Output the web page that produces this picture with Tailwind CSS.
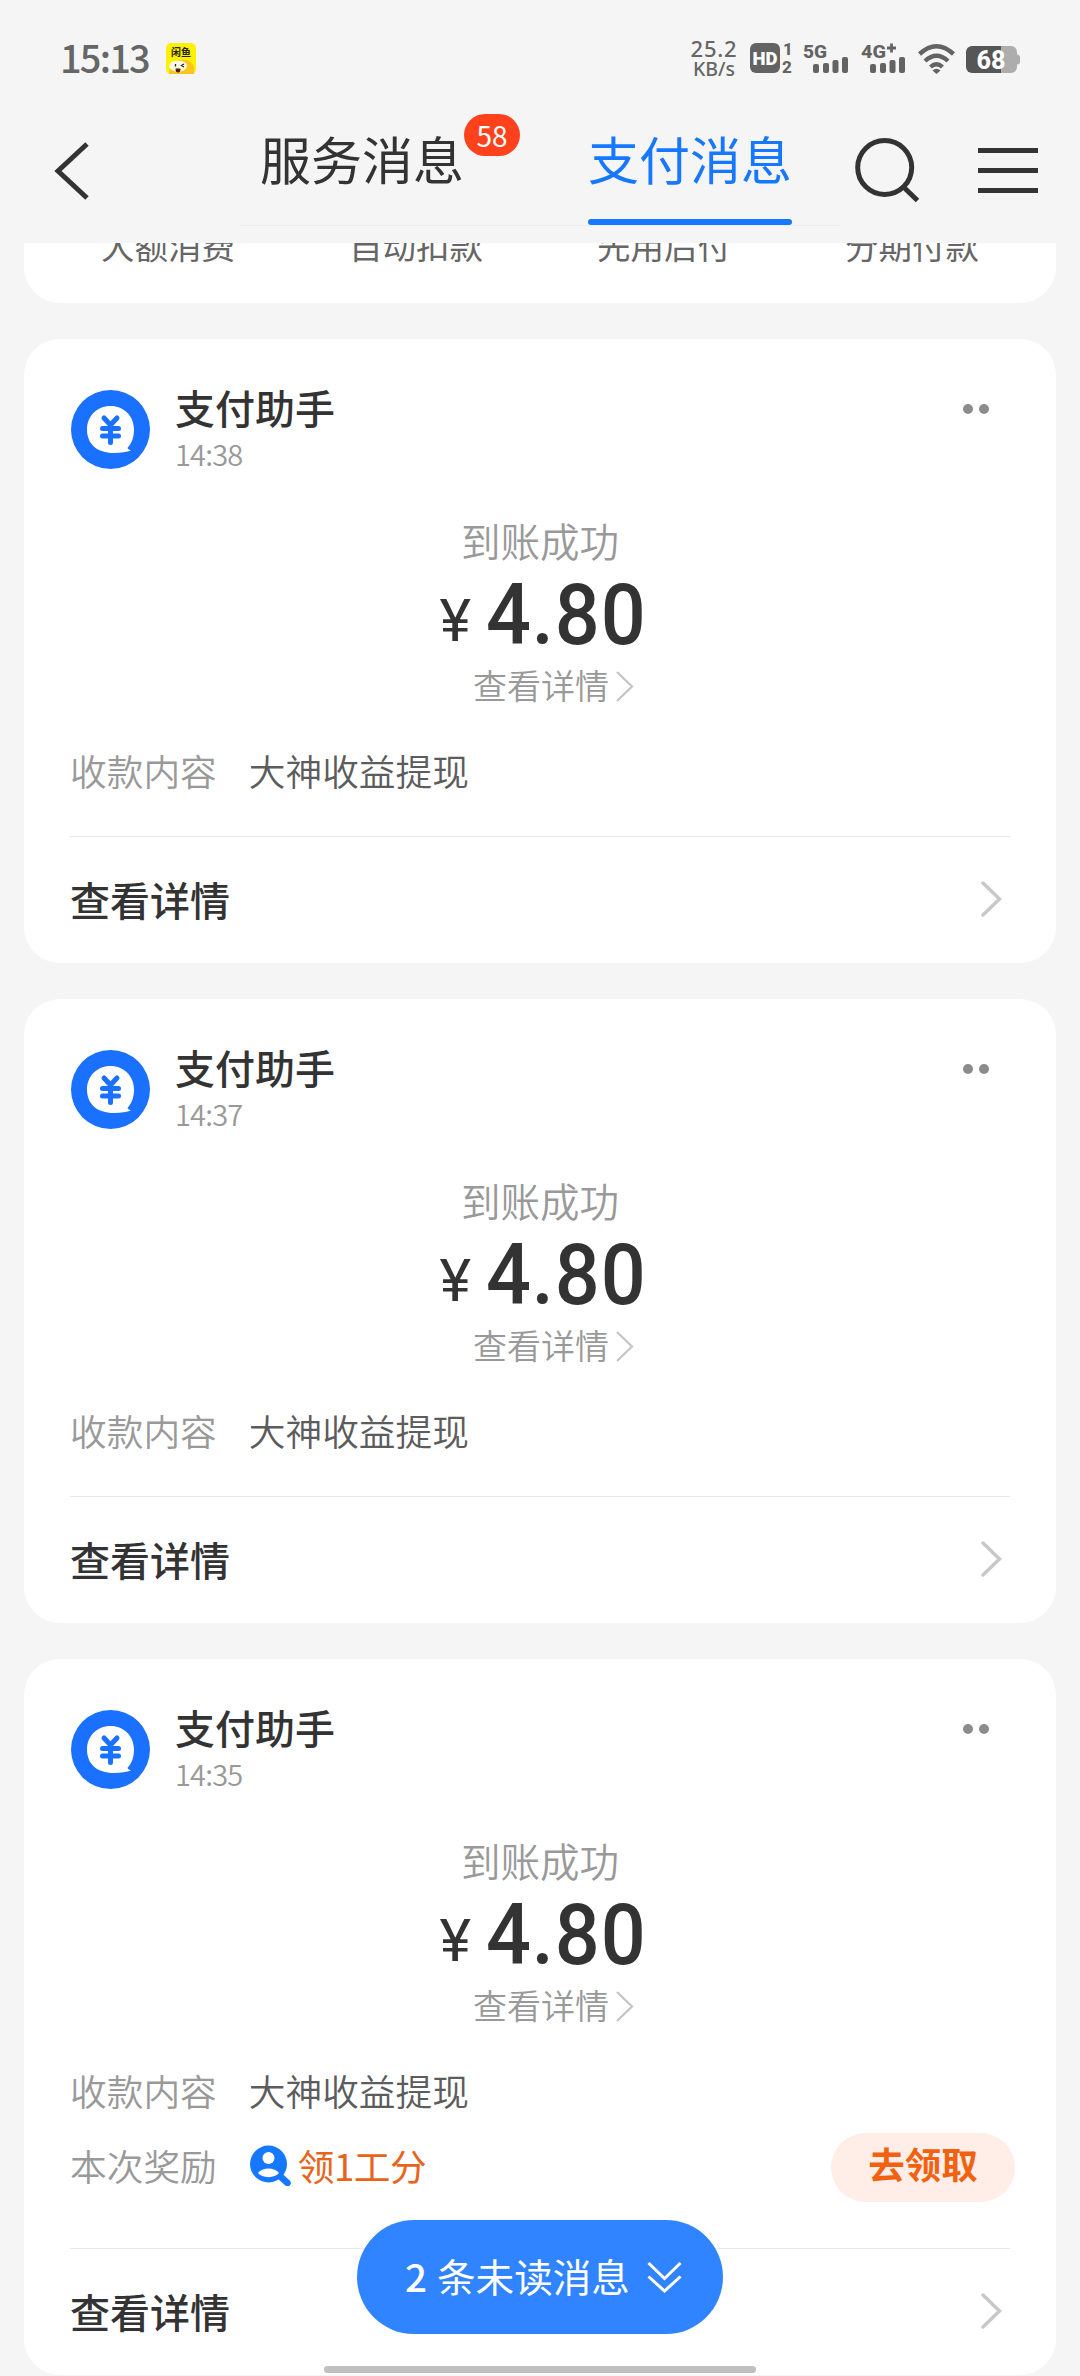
<!DOCTYPE html>
<html lang="zh-CN">
<head>
<meta charset="utf-8">
<title>支付消息</title>
<script src="https://cdn.jsdelivr.net/npm/@tailwindcss/browser@4"></script>
</head>
<body class="w-[1080px] h-[2376px] overflow-hidden bg-[#f5f5f5] font-['Noto_Sans_CJK_SC',sans-serif] text-[#333]">
<svg class="hidden">
  <symbol id="avatar" viewBox="0 0 79 79">
    <circle cx="39.500" cy="39.500" r="39.500" fill="#1a70ff"/>
    <path d="M39.500 16C26 16 16 26 16 39.500C16 54 26 63 43 63C50 63 56 62 60 60.500C58.500 60 57 59 56.500 58C61 53 63 47 63 39.500C63 26 53 16 39.500 16Z" fill="#fff"/>
    <path d="M33 28l6.500 7l6.500-7M31.500 38.500h16M31.500 46h16M39.500 36v16.500" fill="none" stroke="#1a70ff" stroke-width="5" stroke-linecap="round" stroke-linejoin="round"/>
  </symbol>
  <symbol id="chev" viewBox="0 0 21 36"><path d="M2 2L18.500 18L2 34" fill="none" stroke="#c8c8c8" stroke-width="3.500" stroke-linecap="round"/></symbol>
  <symbol id="chev-s" viewBox="0 0 18 31"><path d="M1 1L16 15.500L1 30" fill="none" stroke="#c4c4c4" stroke-width="2.200"/></symbol>
</svg>
<div class="relative flex h-full flex-col">
  <!-- status bar -->
  <div class="flex h-[96px] shrink-0 items-start pl-[60px] pt-[43px] text-[#666]">
    <div class="-mt-[4px] w-[106px] text-[38px] leading-[36px] tracking-[-1.800px] font-medium">15:13</div>
    <svg class="h-[31px] w-[30px]" viewBox="0 0 30 31">
      <rect width="30" height="31" rx="5" fill="#fdf000"/>
      <path d="M3 31C4 17 12 16 20 17C27 18 29 24 28 31Z" fill="#fac51c"/>
      <ellipse cx="12" cy="23" rx="9" ry="5.500" fill="#fffbe0"/>
      <path d="M9.500 21v2.500M18 21l-2.500 1.500l2.500 1.500" stroke="#222" stroke-width="1.300" fill="none"/>
      <path d="M9.500 25.500h5c0 3-1 4-2.500 4s-2.500-1-2.500-4Z" fill="#4a1a10"/>
      <text x="5" y="13" font-size="10" font-weight="700" fill="#222" font-family="Noto Sans CJK SC">闲鱼</text>
    </svg>
    <div class="ml-[495px] -mt-[5px] flex w-[46px] flex-col items-center font-['Noto_Sans'] font-medium">
      <span class="text-[22px] leading-[21px] tracking-[0.800px]">25.2</span>
      <span class="text-[19.500px] leading-[19px]">KB/s</span>
    </div>
    <svg class="ml-[13px] h-[32px] w-[272px] overflow-visible" viewBox="750 43 272 32" fill="#636363" font-family="Roboto" font-weight="800">
      <rect x="750" y="43" width="30" height="30" rx="6"/>
      <text x="752.500" y="64.500" font-size="18" font-weight="900" fill="#fff" textLength="25" lengthAdjust="spacingAndGlyphs">HD</text>
      <text x="783" y="55" font-size="17">1</text>
      <text x="782" y="72.500" font-size="17">2</text>
      <text x="803" y="57.500" font-size="19" textLength="24" lengthAdjust="spacingAndGlyphs">5G</text>
      <g id="bars"><rect x="813" y="64" width="6" height="9" rx="2"/><rect x="823" y="63" width="6" height="10" rx="2"/><rect x="832.500" y="60" width="6" height="13" rx="2"/><rect x="842" y="57" width="6" height="16" rx="2"/></g>
      <use href="#bars" x="57"/>
      <text x="861" y="57.500" font-size="19" textLength="25" lengthAdjust="spacingAndGlyphs">4G</text>
      <path d="M891.500 43.500v9M887 48h9" stroke="#636363" stroke-width="2.800"/>
      <g fill="none" stroke="#636363" stroke-width="4.400"><path d="M919.500 54Q936.500 38.500 953.500 54"/><path d="M925 61Q936.500 50.500 948 61"/><path d="M930.500 67Q936.500 61.500 942.500 67"/></g>
      <path d="M932.500 70.500Q936.500 67 940.500 70.500L936.500 74Z"/>
      <path d="M1001 46H1011A6 6 0 0 1 1017 52V54.500Q1020 55 1020 57V62Q1020 64 1017 64.500V67A6 6 0 0 1 1011 73H1001Z" fill="#adadad"/>
      <path d="M1001 46H972A6 6 0 0 0 966 52V67A6 6 0 0 0 972 73H1001Z" fill="#565656"/>
      <text x="976.500" y="68.500" font-size="25" fill="#fff" textLength="29" lengthAdjust="spacingAndGlyphs">68</text>
    </svg>
  </div>

  <!-- navigation -->
  <div class="flex h-[147px] shrink-0 items-start">
    <svg class="ml-[54px] mt-[46px] h-[58px] w-[36px]" viewBox="0 0 36 58"><path d="M33 2L4 29L33 56" fill="none" stroke="#333" stroke-width="5"/></svg>
    <div class="ml-[150px] flex h-[130px] w-[600px] border-b border-[#ededed] pl-[20px] text-[51px]">
      <div class="relative h-[130px] w-[204px]">
        <div class="mt-[32px] text-center leading-[60px]">服务消息</div>
        <div class="absolute left-[204px] top-[18px] flex h-[42px] w-[56px] items-center justify-center rounded-full bg-[#ff411c] text-[28px] leading-none text-white">58</div>
      </div>
      <div class="ml-[124px] flex h-[129px] w-[204px] flex-col justify-between text-[#1677ff]">
        <div class="mt-[32px] text-center leading-[60px]">支付消息</div>
        <div class="h-[6px] rounded-full bg-[#1677ff]"></div>
      </div>
    </div>
    <svg class="ml-[14px] mt-[42px] h-[64px] w-[66px]" viewBox="854 138 66 64" fill="none" stroke="#333" stroke-width="5"><circle cx="884.700" cy="167.500" r="27"/><path d="M904 187.500L917.500 200.500"/></svg>
    <div class="ml-[58px] mt-[52px] flex h-[45px] w-[60px] flex-col justify-between"><i class="h-[5px] bg-[#333]"></i><i class="h-[5px] bg-[#333]"></i><i class="h-[5px] bg-[#333]"></i></div>
  </div>

  <!-- message list -->
  <main id="list" class="flex min-h-0 flex-1 flex-col gap-[36px] px-[24px]">
    <section class="h-[60px] shrink-0 overflow-hidden rounded-b-[36px] bg-white px-[20px]">
      <div class="-mt-[18px] grid grid-cols-4 text-center text-[33.500px] leading-[40px] text-[#666]"><span>大额消费</span><span>自动扣款</span><span>先用后付</span><span>分期付款</span></div>
    </section>
  </main>

  <!-- unread pill -->
  <div class="absolute left-[357px] top-[2220px] flex h-[114px] w-[366px] items-center rounded-full bg-[#3184ff] pl-[48px] text-[38.600px] leading-[44px] text-white">
    <span class="-mt-[4px] font-medium">2</span><span class="-mt-[4px] ml-[10px]">条未读消息</span>
    <svg class="ml-[17px] h-[32px] w-[35px]" viewBox="0 0 35 32" fill="none" stroke="#fff" stroke-width="3"><path d="M1.500 2L17.500 17.500L33.500 2M1.500 15.500L17.500 30L33.500 15.500"/></svg>
  </div>
  <div class="absolute left-[324px] top-[2366px] h-[7px] w-[432px] rounded-full bg-[#c0c0c0]"></div>
</div>

<template id="card">
  <section class="flex shrink-0 flex-col rounded-[36px] bg-white px-[46px] pt-[51px]">
    <div class="flex h-[79px] items-start pl-px">
      <svg class="size-[79px]"><use href="#avatar"/></svg>
      <div class="ml-[25px] flex-1"><div class="-mt-[3px] text-[40px] font-medium leading-[40px]">支付助手</div><div data-time class="mt-[7px] text-[29px] font-[350] leading-[38px] tracking-[-0.800px] text-[#999]"></div></div>
      <div class="mr-[21px] mt-[14px] flex gap-[6px]"><i class="size-[10px] rounded-full bg-[#8c8c8c]"></i><i class="size-[10px] rounded-full bg-[#8c8c8c]"></i></div>
    </div>
    <div class="mt-[47px] text-center text-[39.500px] font-[350] leading-[48px] text-[#999]">到账成功</div>
    <div class="mt-[6px] flex h-[90px] items-baseline justify-center pl-[6px] font-['Roboto'] font-medium"><span class="-translate-y-[3px] text-[60px] font-normal leading-[90px]">¥</span><span class="ml-[1px] inline-block origin-right scale-x-92 text-[86px] leading-[90px] tracking-[1px]">4.80</span></div>
    <div class="mt-[5px] flex h-[40px] items-center justify-center gap-[7px] pl-[27px] text-[34px] font-[350] leading-[40px] text-[#999]">查看详情<svg class="mt-[3px] h-[31px] w-[18px]"><use href="#chev-s"/></svg></div>
    <div class="mt-[47px] flex h-[40px] gap-[32px] text-[36.700px] leading-[37px]"><span class="font-[350] text-[#999]">收款内容</span><span class="font-[350] text-[#5c5c5c]">大神收益提现</span></div>
    <div data-reward class="mt-[21px] flex h-[69px] items-center text-[36.700px] leading-[40px]">
      <span class="-mt-[6px] font-[350] text-[#999]">本次奖励</span>
      <svg class="ml-[33px] -mt-[4px] h-[41px] w-[41px]" viewBox="0 0 41 41"><circle cx="18.500" cy="19" r="18.500" fill="#1677ff"/><path d="M31 32L37.500 38" stroke="#1677ff" stroke-width="6.500" stroke-linecap="round"/><circle cx="18.500" cy="13" r="6" fill="#fff"/><path d="M8 28C12 22 25 22 29 28C25 33.500 12 33.500 8 28Z" fill="#fff"/></svg>
      <span class="-mt-[6px] ml-[7px] tracking-[-0.500px] text-[#e8641b]">领1工分</span>
      <div class="-mr-[5px] ml-auto flex h-[69px] w-[184px] items-center justify-center rounded-full bg-[#ffeee8] pb-[8px] text-[36.500px] font-bold text-[#f2610f]">去领取</div>
    </div>
    <div data-rule class="mt-[44px] h-px shrink-0 bg-[#e8e8e8]"></div>
    <div class="flex h-[126px] shrink-0 items-center justify-between pb-[3px] pr-[8px]"><span class="text-[40px] font-medium leading-[44px]">查看详情</span><svg class="h-[36px] w-[21px]"><use href="#chev"/></svg></div>
  </section>
</template>
<script>
  const list = document.getElementById('list');
  [['14:38', false], ['14:37', false], ['14:35', true]].forEach(([time, reward]) => {
    const card = document.getElementById('card').content.firstElementChild.cloneNode(true);
    card.querySelector('[data-time]').textContent = time;
    card.classList.add(reward ? 'h-[716px]' : 'h-[624px]');
    if (reward) card.querySelector('[data-rule]').classList.replace('mt-[44px]', 'mt-[46px]');
    else card.querySelector('[data-reward]').remove();
    list.append(card);
  });
</script>
</body>
</html>
